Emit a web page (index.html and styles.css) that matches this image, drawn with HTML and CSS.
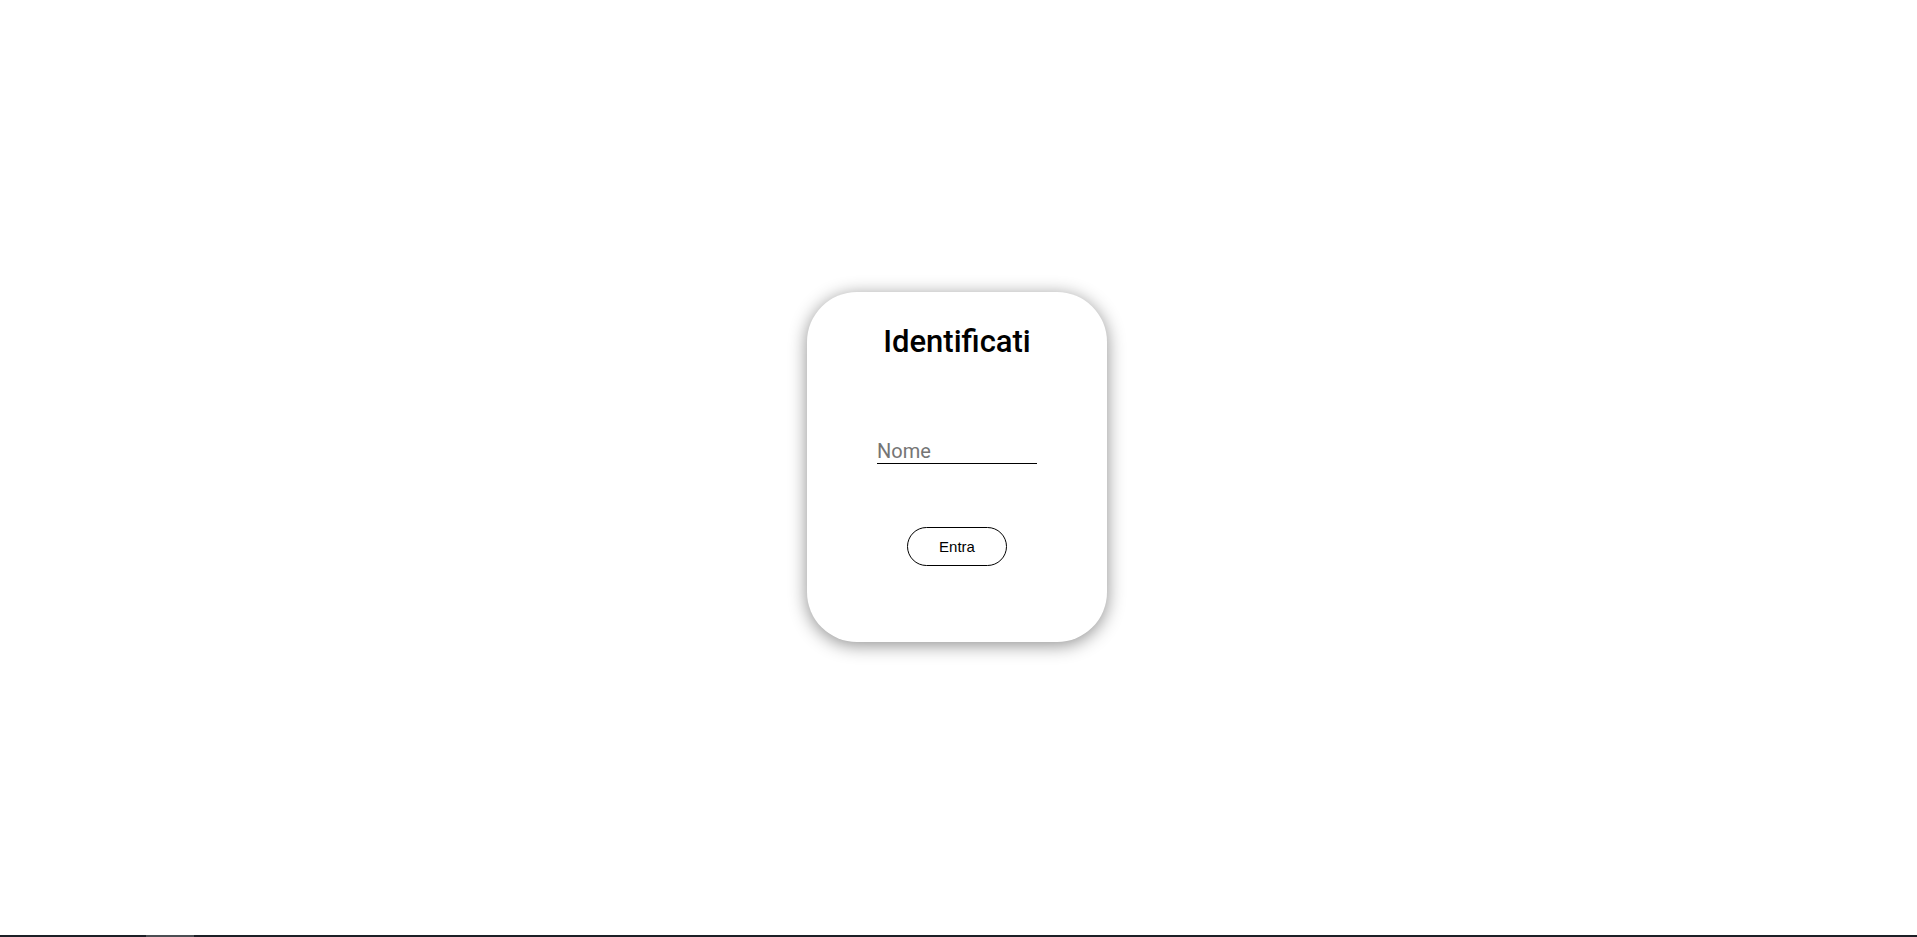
FILE: index.html
```html
<!DOCTYPE html>
<html lang="it">
<head>
<meta charset="utf-8">
<title>Identificati</title>
<link rel="stylesheet" href="styles.css">
</head>
<body>
<main class="stage">
  <form class="card" onsubmit="return false">
    <h1 class="title">Identificati</h1>
    <input class="name-input" type="text" placeholder="Nome">
    <button class="enter-btn" type="submit">Entra</button>
  </form>
</main>
<div class="bottom-strip"><span class="strip-seg"></span></div>
</body>
</html>
```

FILE: styles.css
```css
html, body {
  margin: 0;
  padding: 0;
  background: #ffffff;
  height: 100%;
}
body {
  display: flex;
  flex-direction: column;
  font-family: Roboto, "Liberation Sans", sans-serif;
}
.stage {
  flex: 1;
  display: flex;
  align-items: center;
  justify-content: center;
  padding: 0 3px 2px 0;
}
.card {
  box-sizing: border-box;
  width: 300px;
  height: 350px;
  background: #ffffff;
  border-radius: 50px;
  box-shadow: 0 3px 18px rgba(0, 0, 0, 0.45);
  display: flex;
  flex-direction: column;
  align-items: center;
  padding-top: 31px;
}
.title {
  margin: 0;
  font-family: Roboto, sans-serif;
  font-weight: 500;
  font-size: 31px;
  line-height: 37px;
  color: #000;
}
.name-input {
  box-sizing: border-box;
  margin-top: 79px;
  width: 160px;
  height: 25px;
  padding: 0;
  border: none;
  border-bottom: 1px solid #000;
  outline: none;
  font-family: Roboto, sans-serif;
  font-size: 20px;
  color: #000;
  background: transparent;
}
.name-input::placeholder {
  color: #757575;
}
.enter-btn {
  box-sizing: border-box;
  margin-top: 63px;
  width: 100px;
  height: 39px;
  border: 1px solid #000;
  border-radius: 20px;
  background: #fff;
  font-family: Arial, "Liberation Sans", sans-serif;
  font-size: 15px;
  color: #000;
  padding: 0;
}
.bottom-strip {
  height: 2px;
  background: #1c1f26;
  display: flex;
}
.strip-seg {
  margin-left: 146px;
  width: 48px;
  background: #4b4e53;
}
```
